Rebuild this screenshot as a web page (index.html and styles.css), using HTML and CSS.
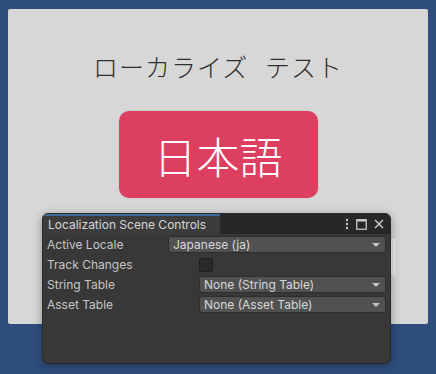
FILE: index.html
```html
<!DOCTYPE html>
<html lang="ja">
<head>
<meta charset="utf-8">
<link rel="stylesheet" href="styles.css">
</head>
<body>
<div class="stage">
  <div class="panel">
    <h1 class="title">ローカライズ テスト</h1>
    <div class="lang-btn">日本語</div>
    <div class="scroll-hint"></div>
  </div>
  <div class="window">
    <div class="win-header">
      <div class="tab">Localization Scene Controls</div>
      <div class="win-icons">
        <svg width="4" height="12" viewBox="0 0 4 12"><circle cx="2" cy="2" r="1.2" fill="#c8c8c8"/><circle cx="2" cy="6" r="1.2" fill="#c8c8c8"/><circle cx="2" cy="10" r="1.2" fill="#c8c8c8"/></svg>
        <svg width="11" height="11" viewBox="0 0 11 11"><rect x="0.75" y="0.75" width="9.5" height="9.5" fill="none" stroke="#c8c8c8" stroke-width="1.3"/><rect x="0.75" y="0.75" width="9.5" height="1.8" fill="#c8c8c8"/></svg>
        <svg width="10" height="10" viewBox="0 0 10 10"><path d="M1 1L9 9M9 1L1 9" stroke="#c8c8c8" stroke-width="1.5"/></svg>
      </div>
    </div>
    <div class="win-body">
      <div class="row">
        <span class="label">Active Locale</span>
        <div class="dropdown wide">Japanese (ja)<span class="arrow"></span></div>
      </div>
      <div class="row">
        <span class="label">Track Changes</span>
        <div class="field"><span class="checkbox"></span></div>
      </div>
      <div class="row">
        <span class="label">String Table</span>
        <div class="field"><div class="dropdown">None (String Table)<span class="arrow"></span></div></div>
      </div>
      <div class="row">
        <span class="label">Asset Table</span>
        <div class="field"><div class="dropdown">None (Asset Table)<span class="arrow"></span></div></div>
      </div>
    </div>
  </div>
</div>
</body>
</html>
```

FILE: styles.css
```css
* { box-sizing: border-box; }
html, body { margin: 0; padding: 0; }
body {
  width: 436px;
  height: 374px;
  overflow: hidden;
  background: #2f4e7c;
  font-family: Inter, "Noto Sans", sans-serif;
}
.stage {
  position: relative;
  width: 436px;
  height: 374px;
  padding: 9px 8px 50px 8px;
}
.panel {
  position: relative;
  height: 315px;
  background: #d7d7d7;
  border-radius: 2px;
  display: flex;
  flex-direction: column;
  align-items: center;
}
.title {
  margin: 40px 0 0 0;
  font-family: "Noto Sans CJK JP", sans-serif;
  font-weight: 300;
  font-size: 25px;
  line-height: 34px;
  color: #2e2e2e;
  letter-spacing: 1px;
  word-spacing: 10px;
  white-space: pre;
}
.lang-btn {
  margin-top: 28px;
  width: 199px;
  height: 87px;
  background: #dc3f5f;
  border-radius: 10px;
  color: #ffffff;
  font-family: "Noto Sans CJK JP", sans-serif;
  font-weight: 300;
  font-size: 43px;
  display: flex;
  align-items: center;
  justify-content: center;
  box-shadow: 0 0 3px rgba(0,0,0,0.08);
}
.scroll-hint {
  position: absolute;
  left: 383px;
  top: 230px;
  width: 4px;
  height: 36px;
  border: 1px solid #f4f4f4;
  background: #e4e4e4;
  border-radius: 1px;
}
.window {
  position: absolute;
  left: 42px;
  top: 213px;
  width: 349px;
  height: 151px;
  background: #383838;
  border-radius: 6px;
  overflow: hidden;
  box-shadow: 0 2px 10px rgba(0,0,0,0.35);
  border: 1px solid #2a2a2a;
}
.win-header {
  height: 20px;
  background: #272727;
  display: flex;
  align-items: stretch;
}
.tab {
  width: 177px;
  background: #3c3c3c;
  border-top: 2px solid #3d6b9c;
  color: #d6d6d6;
  font-size: 12px;
  line-height: 17px;
  padding-left: 5px;
  white-space: nowrap;
}
.win-icons {
  margin-left: auto;
  display: flex;
  align-items: center;
  gap: 7px;
  padding-right: 6px;
}
.win-body {
  padding-top: 2px;
  display: flex;
  flex-direction: column;
  gap: 3px;
}
.row {
  height: 17px;
  display: flex;
  align-items: center;
  padding-left: 4px;
  padding-right: 4px;
}
.label {
  width: 121px;
  flex: none;
  color: #c6c6c6;
  font-size: 12px;
  white-space: nowrap;
}
.field {
  flex: 1;
  display: flex;
  padding-left: 31px;
  height: 100%;
  align-items: center;
}
.dropdown {
  position: relative;
  flex: 1;
  height: 17px;
  background: #515151;
  border: 1px solid #2e2e2e;
  border-radius: 3px;
  color: #d8d8d8;
  font-size: 12px;
  line-height: 15px;
  padding-left: 4px;
  white-space: nowrap;
}
.arrow {
  position: absolute;
  right: 5px;
  top: 6px;
  width: 0;
  height: 0;
  border-left: 4px solid transparent;
  border-right: 4px solid transparent;
  border-top: 4px solid #c4c4c4;
}
.checkbox {
  display: block;
  width: 14px;
  height: 14px;
  background: #2a2a2a;
  border: 1px solid #1f1f1f;
  border-radius: 2px;
}
```
